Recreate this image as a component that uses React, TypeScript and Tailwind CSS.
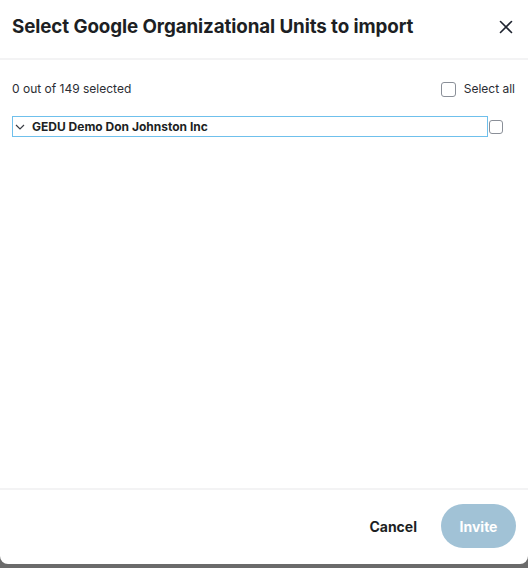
import React from 'react';

export default function App() {
  return (
    <div className="w-[528px] h-[568px] bg-[#6b6b6b] flex flex-col" style={{ fontFamily: 'Inter, "Noto Sans", sans-serif' }}>
      <div className="h-[564px] bg-white rounded-b-[8px] flex flex-col overflow-hidden">
        {/* Header */}
        <div className="h-[60px] flex items-center justify-between pl-[12px] pr-[14px] pb-[4px] border-b-2 border-[#f3f3f4]">
          <h1 className="text-[18.8px] font-bold text-[#1d1f24] tracking-[-0.1px]">
            Select Google Organizational Units to import
          </h1>
          <button className="w-[16px] h-[16px] flex items-center justify-center text-[#1f2430]">
            <svg width="14" height="14" viewBox="0 0 14 14" fill="none" stroke="currentColor" strokeWidth="1.6" strokeLinecap="round">
              <path d="M1.5 1.5L12.5 12.5M12.5 1.5L1.5 12.5" />
            </svg>
          </button>
        </div>

        {/* Body */}
        <div className="flex-1 flex flex-col px-[12px]">
          <div className="flex items-center justify-between mt-[19px] h-[20px]">
            <span className="text-[12px] text-[#2b2d33]">0 out of 149 selected</span>
            <label className="flex items-center gap-[8px] pr-[1px]">
              <span className="w-[15px] h-[15px] rounded-[3px] border border-[#8a8f98] bg-white" />
              <span className="text-[12px] text-[#2b2d33]">Select all</span>
            </label>
          </div>

          <div className="flex items-center mt-[17px]">
            <div className="w-[476px] h-[21px] border border-[#6fc0ec] flex items-center">
              <svg width="10" height="6" viewBox="0 0 10 6" fill="none" stroke="#3a3d44" strokeWidth="1.2" className="ml-[2px]">
                <path d="M1 1L5 5L9 1" />
              </svg>
              <span className="ml-[7px] text-[12px] font-bold text-[#1d1f24]">GEDU Demo Don Johnston Inc</span>
            </div>
            <span className="ml-[1px] w-[14px] h-[14px] rounded-[3px] border border-[#8a8f98] bg-white" />
          </div>
        </div>

        {/* Footer */}
        <div className="h-[76px] border-t-2 border-[#f3f3f4] flex items-center justify-end gap-[24px] pr-[12px] pb-[2px]">
          <button className="text-[14px] font-bold text-[#1d1f24]">Cancel</button>
          <button className="w-[75px] h-[44px] rounded-full bg-[#a1c2d6] text-white text-[14px] font-bold">Invite</button>
        </div>
      </div>
    </div>
  );
}
